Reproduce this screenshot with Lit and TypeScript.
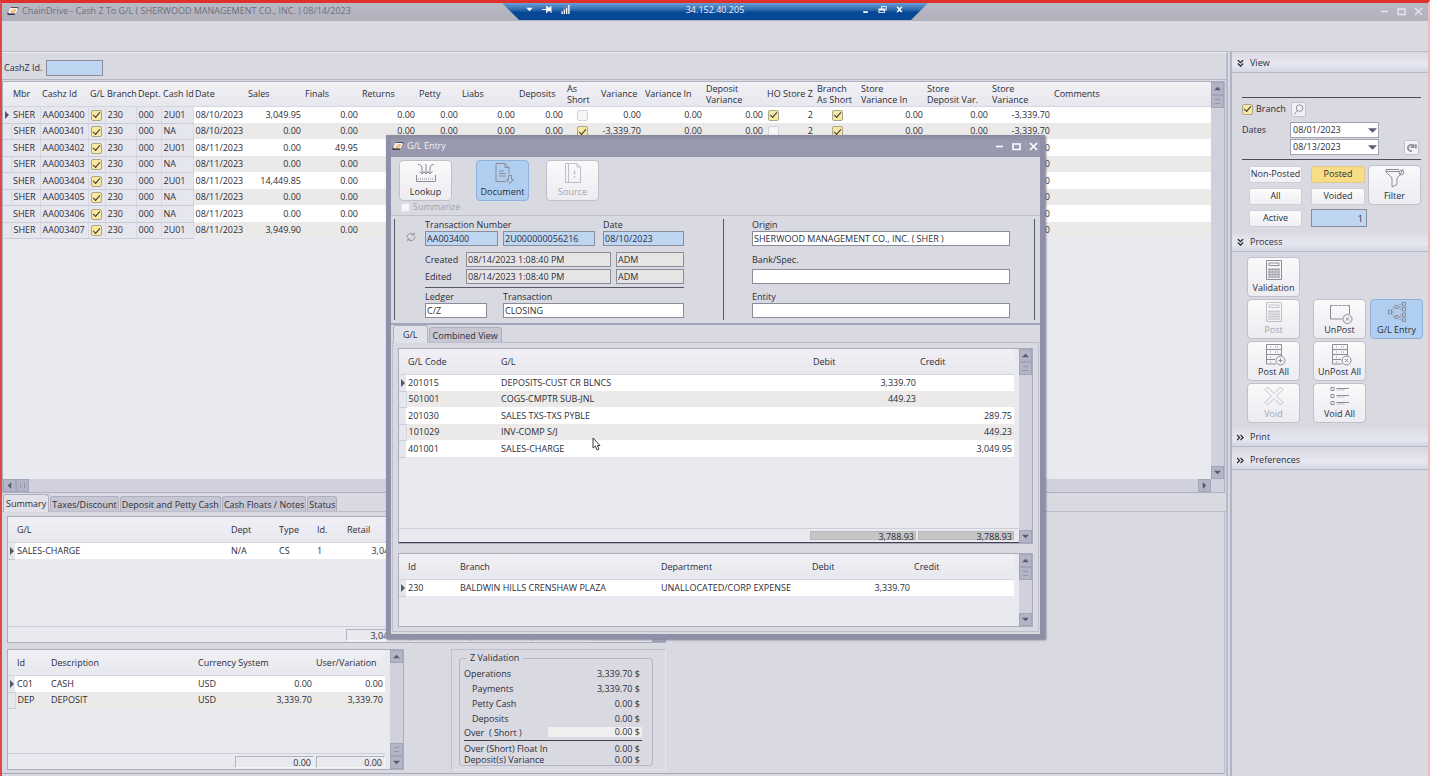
import { LitElement, html, svg, css, nothing } from "lit";
import { customElement } from "lit/decorators.js";
import { classMap } from "lit/directives/class-map.js";

type Col = { w?: number; head?: string; kind?: "num" | "check" | "arrow"; frozen?: boolean };
type Cell = string | boolean | null;

const GRID_COLS: Col[] = [
  { w: 8, kind: "arrow", frozen: true },
  { w: 29, head: "Mbr", frozen: true },
  { w: 48, head: "Cashz Id", frozen: true },
  { w: 17, head: "G/L", kind: "check", frozen: true },
  { w: 31, head: "Branch", frozen: true },
  { w: 25, head: "Dept.", frozen: true },
  { w: 32, head: "Cash Id", frozen: true },
  { w: 53, head: "Date" },
  { w: 57, head: "Sales", kind: "num" },
  { w: 57, head: "Finals", kind: "num" },
  { w: 57, head: "Returns", kind: "num" },
  { w: 43, head: "Petty", kind: "num" },
  { w: 57, head: "Liabs", kind: "num" },
  { w: 48, head: "Deposits", kind: "num" },
  { w: 34, head: "As\nShort", kind: "check" },
  { w: 44, head: "Variance", kind: "num" },
  { w: 61, head: "Variance In", kind: "num" },
  { w: 61, head: "Deposit\nVariance", kind: "num" },
  { w: 16, head: "HO", kind: "check" },
  { w: 34, head: "Store Z", kind: "num" },
  { w: 44, head: "Branch\nAs Short", kind: "check" },
  { w: 66, head: "Store\nVariance In", kind: "num" },
  { w: 65, head: "Store\nDeposit Var.", kind: "num" },
  { w: 62, head: "Store\nVariance", kind: "num" },
  { head: "Comments" },
];

const z = (id: string, cash: string, date: string, sales: string, finals: string, short: boolean, variance: string, ho: boolean, sv: string): Cell[] => [
  null, "SHER", id, true, "230", "000", cash, date, sales, finals, "0.00", "0.00", "0.00", "0.00",
  short, variance, "0.00", "0.00", ho, "2", true, "0.00", "0.00", sv, "",
];

const GRID_ROWS: Cell[][] = [
  z("AA003400", "2U01", "08/10/2023", "3,049.95", "0.00", false, "0.00", true, "-3,339.70"),
  z("AA003401", "NA", "08/10/2023", "0.00", "0.00", true, "-3,339.70", false, "-3,339.70"),
  z("AA003402", "2U01", "08/11/2023", "0.00", "49.95", false, "0.00", false, "0.00"),
  z("AA003403", "NA", "08/11/2023", "0.00", "0.00", false, "0.00", false, "0.00"),
  z("AA003404", "2U01", "08/11/2023", "14,449.85", "0.00", false, "0.00", false, "0.00"),
  z("AA003405", "NA", "08/11/2023", "0.00", "0.00", false, "0.00", false, "0.00"),
  z("AA003406", "NA", "08/11/2023", "0.00", "0.00", false, "0.00", false, "0.00"),
  z("AA003407", "2U01", "08/11/2023", "3,949.90", "0.00", false, "0.00", false, "0.00"),
];

const SUMMARY_COLS: Col[] = [
  { w: 7, kind: "arrow", frozen: true }, { w: 214, head: "G/L" }, { w: 48, head: "Dept" }, { w: 38, head: "Type" },
  { w: 30, head: "Id." }, { w: 64, head: "Retail", kind: "num" }, { w: 61 }, { w: 61 }, { w: 57 }, {},
];
const CURRENCY_COLS: Col[] = [
  { w: 7, kind: "arrow", frozen: true }, { w: 34, head: "Id" }, { w: 147, head: "Description" },
  { w: 36, head: "Currency System" }, { w: 82, kind: "num" }, { head: "User/Variation", kind: "num" },
];
const GL_COLS: Col[] = [
  { w: 7, kind: "arrow", frozen: true }, { w: 93, head: "G/L Code" }, { head: "G/L" },
  { w: 107, head: "Debit", kind: "num" }, { w: 96, head: "Credit", kind: "num" },
];
const BRANCH_COLS: Col[] = [
  { w: 7, kind: "arrow", frozen: true }, { w: 52, head: "Id" }, { head: "Branch" }, { w: 151, head: "Department" },
  { w: 102, head: "Debit", kind: "num" }, { w: 102, head: "Credit", kind: "num" },
];

const ledger = svg`<path d="M12 20H2.500V.5h15V12M2.500 5.500h15M2.500 10.500h15M2.500 15.500H11"/><path stroke-dasharray="1 1" d="M6 3h2M6 8h2M6 13h2M6 18h2M11 3h4M11 8h4"/><circle cx="16.500" cy="16.500" r="4.500"/>`;

const ICONS: Record<string, unknown> = {
  lookup: svg`<path d="M2 1.500c3 0 4 1.500 4 4.500v5M3.500 8.500L6 11l2.500-2.500M10 1v10M7.500 8.500L10 11l2.500-2.500M18 1.500c-3 0-4 1.500-4 4.500v5M11.500 8.500L14 11l2.500-2.500M.5 12v6.500h19V12"/><path stroke-dasharray="1 1" d="M2 16h16"/>`,
  document: svg`<path d="M13 18.500H3V.5h9l4 4V11M12 .5v4h4M6 8h5M6 10.500h7M6 13h7M15.500 12.500h3v4h2l-3.500 4-3.500-4h2z"/>`,
  source: svg`<path d="M2.500.5H14l3.500 3.500v15.500h-15zM5.500.5v19M14 .5V4h3.500"/><path stroke-width="1.500" d="M11.500 7.500v4M11.500 13v1.500"/>`,
  calc: svg`<path d="M2.500.5h15v19h-15zM5 3h10v2.500H5z"/><path class="fill" d="M4 8h12v10H4z" opacity=".35"/><path stroke-dasharray="2 1" d="M4.500 9.500h11M4.500 12h11M4.500 14.500h11M4.500 17h11"/>`,
  unpost: svg`<path d="M12 17H.5V3.500M19.500 3.500V12"/><path stroke-dasharray="3 1" d="M.5 3.500h19"/><circle cx="17.500" cy="17" r="4.500"/><path d="M16 15.500l3 3M19 15.500l-3 3"/>`,
  postall: svg`${ledger}<path d="M14.500 16.500h4M16.500 14.500v4"/>`,
  unpostall: svg`${ledger}<path d="M15 15l3 3M18 15l-3 3"/>`,
  cross: svg`<path d="M3.500 1L10 7.500 16.500 1 19 3.500 12.500 10l6.500 6.500-2.500 2.500L10 12.500 3.500 19 1 16.500 7.500 10 1 3.500z"/>`,
  list: svg`<path d="M1 1.500h3v3H1zM1 8.500h3v3H1zM1 15.500h3v3H1zM6.500 2.500h12.500M6.500 9.500h12.500M6.500 16.500h12.500"/><path opacity=".5" d="M6.500 4h8M6.500 11h8M6.500 18h8"/>`,
  tree: svg`<path d="M1.500 8h3v4h-3zM8 3.500h3v3H8zM8 13.500h3v3H8zM15.500.5h3v3.500h-3zM15.500 5.500h3V9h-3zM15.500 11h3v3.500h-3zM15.500 16h3v3.500h-3z"/><path stroke-dasharray="1 1" d="M6 10V5h2M6 10v5h2M11 5h2V2h2M13 5v2.500h2M11 15h2v-2h2M13 15v3h2"/>`,
  funnel: svg`<path d="M14 1.500H1V4l6 6v9l5-2.500V10l3-3"/><path d="M1 3.500h13"/><circle cx="16.500" cy="4.500" r="2.300"/><path d="M18 1l-3.500 7"/>`,
  magnifier: svg`<circle cx="12" cy="7.500" r="6" stroke-width="1.800"/><path stroke-width="1.800" d="M8 12l-6 7"/>`,
  redo: svg`<path stroke-width="3" d="M11 16a5.500 5.500 0 1 1 2-9M14 4v5.500H8.500M18 4v8"/>`,
  refresh: svg`<path stroke-width="1.800" d="M2 11V9.500a8 8 0 0 1 14-4M18 9v1.500a8 8 0 0 1-14 4M16.500 1v5H11M3.500 19v-5H9"/>`,
};

const icon = (name: string) => html`<svg class="ico" viewBox="0 0 20 20" aria-hidden="true">${ICONS[name]}</svg>`;

const logo = html`<svg class="logo" viewBox="0 0 24 20" aria-hidden="true">
  <path d="M2 15L7 3h16l-6 12z" fill="#f6f6f8"/><path d="M1 12v6h14l2-3H4z" fill="#3a3a44"/>
  <path d="M8 2h15v5l-3-3H7z" fill="#50505c"/><path d="M7 12l4-5 5-1 2 3-4 4-5 1z" fill="#f0a848"/><circle cx="12.500" cy="9.500" r="1.500" fill="#fff"/>
</svg>`;

const tri = (dir: string) => html`<svg class="tri" viewBox="0 0 8 8" aria-hidden="true"><path d=${
  { up: "M0 6l4-4 4 4z", down: "M0 2h8L4 6z", left: "M6 0v8L2 4z", right: "M2 0l4 4-4 4z" }[dir]!}/></svg>`;

const vscroll = (thumb: "top" | "bottom" | "none" = "top") => html`<div class="vscroll">
  <button class="sb" aria-label="Scroll up">${tri("up")}</button>
  ${thumb === "top" ? html`<span class="thumb"></span>` : nothing}
  <span class="track"></span>
  ${thumb === "bottom" ? html`<span class="thumb"></span>` : nothing}
  <button class="sb" aria-label="Scroll down">${tri("down")}</button>
</div>`;

const cellBody = (c: Col, v: Cell, first: boolean, label: string) => {
  if (c.kind === "arrow") return first ? html`<svg class="mark" viewBox="0 0 4 8" aria-hidden="true"><path d="M0 0l4 4-4 4z"/></svg>` : nothing;
  if (typeof v === "boolean") return html`<input type="checkbox" aria-label=${label} .checked=${v}>`;
  return v;
};

const dataTable = (cols: Col[], rows: Cell[][]) => html`<table>
  <colgroup>${cols.map((c) => html`<col style=${c.w ? `width:${c.w}px` : ""}>`)}</colgroup>
  <thead><tr>${cols.map((c) => html`<th scope="col">${c.head ?? ""}</th>`)}</tr></thead>
  <tbody>${rows.map((r, i) => html`<tr>${cols.map((c, j) => html`<td class=${classMap({
    num: c.kind === "num", check: c.kind === "check", frozen: !!c.frozen, mk: c.kind === "arrow",
  })}>${cellBody(c, r[j] ?? "", i === 0, (c.head ?? "").replace("\n", " "))}</td>`)}</tr>`)}</tbody>
</table>`;

const tool = (name: string, label: string, cls = "", disabled = false) =>
  html`<button class="tool ${cls}" ?disabled=${disabled}>${icon(name)}<span>${label}</span></button>`;

const chevrons = (down: boolean) => html`<svg class="chev" viewBox="0 0 8 8" aria-hidden="true"><path d=${
  down ? "M1 0l3 3 3-3M1 4l3 3 3-3" : "M0 1l3 3-3 3M4 1l3 3-3 3"}/></svg>`;

@customElement("app-root")
export class AppRoot extends LitElement {
  static styles = css`
    :host { display: block; font: 9px/12px "Open Sans", "Noto Sans", sans-serif; color: #2c2d38; }
    * { box-sizing: border-box; }
    button, input, select { font: inherit; color: inherit; margin: 0; padding: 0; border-radius: 0; }
    button { cursor: pointer; }
    .page { position: relative; display: flex; flex-direction: column; min-height: 100vh; overflow: hidden; background: #d9d9e2;
      border-top: 3px solid #e0302c; border-left: 2px solid #d94a48; border-right: 2px solid #f2b9bd; }

    .titlebar { display: flex; align-items: center; gap: 3px; height: 18px; padding: 0 5px 2px; background: linear-gradient(#b9b9c5, #b1b1be); color: #6d6e79; }
    .logo { width: 12px; height: 10px; flex: none; }
    .winbtns { display: flex; gap: 8px; margin-left: auto; }
    .winbtns button { width: 9px; height: 9px; border: 0; background: none; display: flex; }
    .winbtns svg { width: 9px; height: 9px; fill: none; stroke: #e6e6ee; stroke-width: 1.4; }
    .remote { position: absolute; top: 0; left: 50%; transform: translateX(-50%); width: 426px; height: 17px; color: #e9effa;
      clip-path: polygon(0 0, 100% 0, 409px 100%, 17px 100%); background: linear-gradient(#6aa0d6, #2c68ad 40%, #064796 55%, #064796);
      display: grid; grid-template-columns: 1fr auto 1fr; align-items: center; padding: 0 24px 4px 24px; }
    .remote svg { display: block; height: 9px; fill: #fff; stroke: none; }
    .remote .grp { display: flex; gap: 9px; align-items: center; }
    .remote .end { justify-content: flex-end; gap: 8px; }
    .ribbon { height: 31px; border-bottom: 1px solid #bcbcca; }
    .main { flex: 1; display: flex; min-height: 0; }
    .left { flex: 1; min-width: 0; display: flex; flex-direction: column; border-right: 2px solid #b9b9c8; border-top: 1px solid #ececf3; }
    .idrow { display: flex; align-items: center; gap: 4px; height: 27px; padding: 4px 2px 0; border-bottom: 1px solid #b4b4c4; }
    .field { height: 15px; border: 1px solid #8b8c9a; background: #fff; padding: 0 1px; min-width: 0; width: 100%; outline: 0; }
    .blue { background: #bfd6f2; }
    .grey { background: #e5e5e5; }
    .idrow .field { width: 57px; height: 16px; }

    .gridbox { flex: 1; display: flex; flex-direction: column; margin: 1px 1px 0 0; border: 1px solid #b0b0c0; background: #e9e9f0; }
    .gridrow { flex: 1; display: flex; }
    .gridcell { flex: 1; min-width: 0; }
    .gridcell th { height: 24px; }
    table { width: 100%; border-collapse: collapse; table-layout: fixed; }
    th { height: 25px; padding: 0 0 0 2px; text-align: left; font-weight: 400; white-space: pre; line-height: 11px;
      background: linear-gradient(#f0f0f5, #e7e7ee); border-bottom: 1px solid #d6d6e0; overflow: visible; }
    td { height: 16px; padding: 0 2px; white-space: nowrap; line-height: 12px; background: #fff; }
    tbody tr:nth-child(odd) td { height: 17px; }
    tbody tr:nth-child(even) td { background: #ebeae8; }
    tbody td.frozen, tbody tr:nth-child(even) td.frozen { background: #e6e6ee; border-bottom: 1px solid #ccccd8; border-right: 1px solid #d8d8e2; }
    tbody td.mk { border-right: 0; padding: 0 0 0 2px; }
    td.num { text-align: right; }
    td.check { text-align: center; padding: 0; }
    .mark { display: block; width: 4px; height: 8px; fill: #555668; }
    input[type="checkbox"] { appearance: none; display: inline-grid; place-items: center; width: 11px; height: 11px; border: 1px solid #d2d2d8;
      border-radius: 2px; background: #f6f6f8; vertical-align: middle; flex: none; }
    input[type="checkbox"]:checked { background: #fbe89f; border-color: #a9a58f; }
    input[type="checkbox"]:checked::after { content: ""; width: 6px; height: 3px; border-left: 1px solid #33343a; border-bottom: 1px solid #33343a;
      transform: translateY(-1px) rotate(-48deg); }
    .vscroll { width: 13px; flex: none; display: flex; flex-direction: column; background: #d1d1dd; }
    .hscroll { display: flex; height: 13px; padding-right: 13px; background: #d1d1dd; }
    .hscroll .track, .vscroll .track { flex: 1; }
    .sb, .thumb { width: 13px; height: 13px; flex: none; border: 1px solid #a4a4b8; background: #b4b4c7; display: grid; place-items: center; }
    .thumb::after { content: ""; width: 5px; height: 3px; border: solid #9495a8; border-width: 1px 0; }
    .hscroll .thumb::after { width: 3px; height: 5px; border-width: 0 1px; }
    .tri { width: 7px; height: 7px; fill: #5a5b70; }

    .tabs { display: flex; align-items: flex-end; gap: 1px; height: 19px; padding: 0 1px; border-bottom: 1px solid #bdbdcb; }
    .tab { height: 15px; border: 1px solid #aeaebf; border-bottom: 0; border-radius: 3px 3px 0 0; background: #c7c7d4; padding: 0 1px; line-height: 13px; }
    .tab.on { height: 18px; background: #e1e1ea; margin-bottom: -1px; line-height: 15px; padding: 0 2px; }
    .below { display: flex; flex-direction: column; gap: 6px; padding: 4px 4px 3px 5px; margin-right: 1px; border-right: 1px solid #bdbdcb; border-bottom: 1px solid #a9a9bb; margin-bottom: 2px; }
    .panel { display: flex; border: 1px solid #acacbd; background: #e9e9f0; }
    .panel .inner { flex: 1; min-width: 0; display: flex; flex-direction: column; }
    .foot { margin-top: auto; display: flex; gap: 2px; height: 16px; padding: 2px 0 1px; border-top: 1px solid #cfcfda; }
    .sum { border: 1px solid #b4b4bf; border-right-color: #f6f6fa; border-bottom-color: #f6f6fa; text-align: right; line-height: 11px; }
    .summary { width: 659px; height: 127px; }
    .s1 { width: 62px; margin-left: 338px; padding-right: 1px; }
    .sx { width: 59px; }
    .lower { display: flex; gap: 47px; }
    .currency { width: 397px; height: 121px; }
    .currency .inner { padding-right: 5px; }
    .c1 { width: 79px; margin-left: 227px; padding-right: 2px; }
    .c2 { flex: 1; padding-right: 2px; }
    .zbox { width: 215px; height: 121px; padding: 2px 12px 4px 7px; border: 1px solid #bfbfcc; border-right-color: #e6e6ee; border-bottom-color: #e6e6ee; }
    fieldset { margin: 0; height: 114px; min-width: 0; border: 1px solid #b4b4c3; border-radius: 3px; padding: 3px 10px 0 4px; }
    legend { margin-left: 2px; padding: 0 4px; }
    dl { margin: 0; display: flex; flex-direction: column; }
    .zr { display: flex; justify-content: space-between; height: 15px; line-height: 14px; padding-right: 2px; white-space: pre; }
    .zr dd { margin: 0; text-align: right; }
    .zr.in dt { padding-left: 8px; }
    .zr.over { height: 13px; line-height: 12px; }
    .zr.over dd { background: #efefef; width: 94px; height: 10px; line-height: 10px; margin-right: -2px; padding-right: 2px; }
    .zr.cut { border-top: 1px solid #3f404c; height: 14px; padding-top: 1px; line-height: 14px; }
    .zr.last { height: 12px; line-height: 12px; }

    .side { width: 198px; flex: none; margin-left: 2px; border-left: 2px solid #b3b3c6; padding-top: 2px; }
    .sec { display: flex; align-items: center; gap: 6px; width: 100%; height: 19px; border: 0; border-bottom: 1px solid #b9b9cb; padding: 0 5px;
      background: linear-gradient(#dcdce6, #e6e7f0 60%, #d4d7e3); text-align: left; }
    .chev { width: 7px; height: 7px; fill: none; stroke: #22232c; stroke-width: 1.4; }
    .view { padding: 24px 7px 6px 10px; }
    .rule { border-top: 1px solid #4c4d58; }
    .dates { display: grid; grid-template-columns: 48px 88px 1fr; row-gap: 1px; align-items: center; padding: 2px 0 4px; }
    .dates .br { grid-column: 1 / -1; display: flex; align-items: center; gap: 3px; height: 18px; margin-bottom: 3px; }
    .dates .br label { margin-right: 2px; }
    .mini { width: 15px; height: 15px; border: 1px solid #c3c3cd; border-radius: 2px; background: #f2f2f6; display: grid; place-items: center; }
    .mini .ico { width: 11px; height: 11px; }
    .mini.end { justify-self: end; margin-right: 2px; }
    .combo { display: grid; grid-column: 2; }
    .combo > * { grid-area: 1 / 1; }
    .combo select { appearance: none; width: 89px; height: 16px; border: 1px solid #a3a4b2; background: #fff; padding: 0 2px; }
    .combo .tri { justify-self: end; align-self: center; margin-right: 2px; width: 9px; height: 9px; pointer-events: none; }
    .filters { display: grid; grid-template-columns: 53px 54px 52px; column-gap: 9px; row-gap: 4px; padding: 5px 0 0 7px; align-items: center; }
    .filters button.f { height: 17px; border: 1px solid #cfcfd8; border-radius: 2px; background: linear-gradient(#fcfcfd, #f0f0f4); }
    .filters button.yl { background: #f9dd86; border-color: #dcc98c; }
    .filters .tool { grid-row: 1 / 3; grid-column: 3; margin-left: -6px; }
    .filters .field { text-align: right; width: 56px; height: 18px; padding-right: 3px; }
    .tool { width: 53px; height: 40px; display: flex; flex-direction: column; align-items: center; justify-content: space-between; padding: 2px 0;
      border: 1px solid #c0c0cb; border-radius: 4px; background: linear-gradient(#fafafb, #ececf1); line-height: 12px; white-space: nowrap; }
    .ico { width: 20px; height: 20px; fill: none; stroke: #8b8c98; stroke-width: 1; overflow: visible; }
    .ico circle { fill: #f2f2f5; }
    .ico .fill { fill: #7e7f8b; stroke: none; }
    .tool.sel { background: #b0ceef; border-color: #8db0dc; }
    .tool:disabled { color: #a4a5ae; }
    .tool:disabled .ico { opacity: .5; }
    .process { display: grid; grid-template-columns: 66px 57px 53px; row-gap: 2px; padding: 5px 0 5px 15px; }
    .shut { margin-bottom: 4px; }

    .modal { position: absolute; left: 384px; top: 132px; width: 659px; border: 5px solid #8f8fa8; border-top: 0; background: #d9d9e2;
      box-shadow: 1px 1px 2px #77778c; }
    .mtitle { display: flex; align-items: center; gap: 3px; height: 22px; padding: 0 2px 0 1px; background: linear-gradient(#8989a0, #9a9ab0 30%, #9696ad); color: #f1f1f6; }
    .mtitle .winbtns svg { stroke: #fff; stroke-width: 1.6; }
    .mtools { height: 59px; padding: 3px 8px 0; border-bottom: 1px solid #c0c0cd; }
    .mrow { display: flex; }
    .mrow .tool { height: 41px; }
    .mrow .d { margin-left: 24px; }
    .mrow .s { margin-left: 17px; }
    .chk { display: flex; align-items: center; gap: 3px; }
    .mtools .chk { color: #a2a3ad; padding-left: 2px; }
    .mtools .chk input { width: 9px; height: 9px; border-color: #e1e1e8; }
    .form { display: flex; margin: 3px 5px 3px 3px; border: solid #555663; border-width: 0 1px; height: 101px; }
    .fa { width: 329px; padding: 0 39px 0 30px; border-right: 1px solid #555663; position: relative; }
    .fb { flex: 1; padding: 0 24px 0 28px; }
    .fa .ico { position: absolute; left: 11px; top: 13px; width: 10px; height: 10px; }
    .g1 { display: grid; grid-template-columns: 78px 100px 81px; }
    .g1 .w1 { width: 73px; } .g1 .w2 { width: 92px; } .g1 .lab2 { grid-column: 1 / 3; }
    .form label { display: block; height: 12px; line-height: 11px; }
    .form .field { display: block; }
    .g2 { display: grid; grid-template-columns: 41px 145px 73px; row-gap: 2px; margin-top: 6px; align-items: center; padding-bottom: 3px; border-bottom: 1px solid #555663; }
    .g2 .w3 { width: 68px; margin-left: 5px; }
    .g3 { display: grid; grid-template-columns: 62px 181px; column-gap: 16px; margin-top: 3px; }
    .form .gap1 { margin-top: 8px; height: 15px; }
    .form .gap2 { margin-top: 7px; }
    .mtabs { border-top: 2px solid #a5a5b9; height: 20px; padding: 0 2px; }
    .mtabs .tab { padding: 0 3px; }
    .mtabs .tab.on { padding: 0 9px; }
    .mbody { margin: 0 1px 2px; border: solid #bdbdcb; border-width: 0 1px 1px; padding: 5px 5px 4px; display: flex; flex-direction: column; gap: 9px; }
    .mbody .inner { padding-right: 5px; }
    .gl { height: 196px; }
    .gl .foot { height: 15px; padding: 2px 5px 2px 0; margin-right: -5px; border-bottom: 1px solid #41424e; }
    .gl .sum { background: #c6c6c6; border-color: #b8b8b8; line-height: 10px; padding-right: 1px; }
    .g-a { width: 106px; margin-left: auto; } .g-b { width: 96px; }
    .bl { height: 74px; }
    .cursor { position: absolute; left: 200px; top: 302px; width: 11px; height: 15px; }
  `;

  private winButtons() {
    return html`<div class="winbtns">
      <button aria-label="Minimize"><svg viewBox="0 0 9 9"><path d="M1 4.500h7"/></svg></button>
      <button aria-label="Maximize"><svg viewBox="0 0 9 9"><path d="M1 2h7v5.500h-7z"/></svg></button>
      <button aria-label="Close"><svg viewBox="0 0 9 9"><path d="M1 1l7 7M8 1l-7 7"/></svg></button>
    </div>`;
  }

  private remoteBar() {
    return html`<div class="remote">
      <div class="grp">
        <svg width="7" viewBox="0 0 7 10"><path d="M0 3h7L3.500 7z"/></svg>
        <svg width="10" viewBox="0 0 10 10"><path d="M0 4.500h4V1h1.500v1.500H9V1h1v8H9V7H5.500v2H4V5.500H0z"/></svg>
        <svg width="9" viewBox="0 0 9 10"><path d="M0 7h1.500v3H0zM2.500 5H4v5H2.500zM5 3h1.500v7H5zM7.500 0H9v10H7.500z"/></svg>
      </div>
      <span>34.152.40.205</span>
      <div class="grp end">
        <svg width="9" viewBox="0 0 9 10"><path d="M2 7h5v2H2z"/></svg>
        <svg width="9" viewBox="0 0 9 10"><path fill-rule="evenodd" d="M3 1h6v5H7v3H0V4h3zM4 2v2h3v1h1V2zM1 6v2h5V6z"/></svg>
        <svg width="9" viewBox="0 0 9 10"><path d="M1 2h2l1.500 1.500L6 2h2L5.700 5 8 8H6L4.500 6.500 3 8H1l2.300-3z"/></svg>
      </div>
    </div>`;
  }

  private zValidation() {
    const r = (k: string, v: string, c = "") => html`<div class="zr ${c}"><dt>${k}</dt><dd>${v}</dd></div>`;
    return html`<div class="zbox"><fieldset><legend>Z Validation</legend><dl>
      ${r("Operations", "3,339.70 $")}${r("Payments", "3,339.70 $", "in")}${r("Petty Cash", "0.00 $", "in")}${r("Deposits", "0.00 $", "in")}
      ${r("Over  ( Short )", "0.00 $", "over")}${r("Over (Short) Float In", "0.00 $", "cut")}${r("Deposit(s) Variance", "0.00 $", "last")}
    </dl></fieldset></div>`;
  }

  private sidePanel() {
    return html`<aside class="side">
      <button class="sec">${chevrons(true)}View</button>
      <div class="view">
        <div class="rule"></div>
        <div class="dates">
          <div class="br"><input type="checkbox" id="branch" checked><label for="branch">Branch</label><button class="mini" aria-label="Find branch">${icon("magnifier")}</button></div>
          <label for="from">Dates</label>
          <span class="combo"><select id="from"><option>08/01/2023</option></select>${tri("down")}</span><span></span>
          <span class="combo"><select aria-label="To date"><option>08/13/2023</option></select>${tri("down")}</span>
          <button class="mini end" aria-label="Reload">${icon("redo")}</button>
        </div>
        <div class="rule"></div>
        <div class="filters">
          <button class="f">Non-Posted</button><button class="f yl">Posted</button>
          <button class="f">All</button><button class="f">Voided</button>
          ${tool("funnel", "Filter")}
          <button class="f">Active</button><input class="field blue" aria-label="Active count" value="1">
        </div>
      </div>
      <button class="sec">${chevrons(true)}Process</button>
      <div class="process">
        ${tool("calc", "Validation")}<span></span><span></span>
        ${tool("calc", "Post", "", true)}${tool("unpost", "UnPost")}${tool("tree", "G/L Entry", "sel")}
        ${tool("postall", "Post All")}${tool("unpostall", "UnPost All")}<span></span>
        ${tool("cross", "Void", "", true)}${tool("list", "Void All")}
      </div>
      <button class="sec shut">${chevrons(false)}Print</button>
      <button class="sec shut">${chevrons(false)}Preferences</button>
    </aside>`;
  }

  private entryWindow() {
    return html`<section class="modal" role="dialog" aria-label="G/L Entry">
      <div class="mtitle">${logo}<span>G/L Entry</span>${this.winButtons()}</div>
      <div class="mtools">
        <div class="mrow">${tool("lookup", "Lookup")}${tool("document", "Document", "sel d")}${tool("source", "Source", "s", true)}</div>
        <label class="chk"><input type="checkbox" disabled>Summarize</label>
      </div>
      <div class="form">
        <div class="fa">
          ${icon("refresh")}
          <div class="g1">
            <label class="lab2" for="tn">Transaction Number</label><label for="dt">Date</label>
            <input class="field blue w1" id="tn" value="AA003400"><input class="field blue w2" aria-label="Transaction reference" value="2U000000056216"><input class="field blue" id="dt" value="08/10/2023">
          </div>
          <div class="g2">
            <label for="cr">Created</label><input class="field grey" id="cr" readonly value="08/14/2023 1:08:40 PM"><input class="field grey w3" aria-label="Created by" readonly value="ADM">
            <label for="ed">Edited</label><input class="field grey" id="ed" readonly value="08/14/2023 1:08:40 PM"><input class="field grey w3" aria-label="Edited by" readonly value="ADM">
          </div>
          <div class="g3">
            <label for="lg">Ledger</label><label for="tr">Transaction</label>
            <input class="field" id="lg" value="C/Z"><input class="field" id="tr" value="CLOSING">
          </div>
        </div>
        <div class="fb">
          <label for="or">Origin</label><input class="field" id="or" value="SHERWOOD MANAGEMENT CO., INC. ( SHER )">
          <label class="gap1" for="bk">Bank/Spec.</label><input class="field" id="bk">
          <label class="gap2" for="en">Entity</label><input class="field" id="en">
        </div>
      </div>
      <div class="tabs mtabs"><button class="tab on">G/L</button><button class="tab">Combined View</button></div>
      <div class="mbody">
        <div class="panel gl">
          <div class="inner">
            ${dataTable(GL_COLS, [
              [null, "201015", "DEPOSITS-CUST CR BLNCS", "3,339.70", ""],
              [null, "501001", "COGS-CMPTR SUB-JNL", "449.23", ""],
              [null, "201030", "SALES TXS-TXS PYBLE", "", "289.75"],
              [null, "101029", "INV-COMP S/J", "", "449.23"],
              [null, "401001", "SALES-CHARGE", "", "3,049.95"],
            ])}
            <div class="foot"><div class="sum g-a">3,788.93</div><div class="sum g-b">3,788.93</div></div>
          </div>
          ${vscroll()}
        </div>
        <div class="panel bl">
          <div class="inner">${dataTable(BRANCH_COLS, [[null, "230", "BALDWIN HILLS CRENSHAW PLAZA", "UNALLOCATED/CORP EXPENSE", "3,339.70", ""]])}</div>
          ${vscroll()}
        </div>
      </div>
      <svg class="cursor" viewBox="0 0 11 15" aria-hidden="true"><path d="M2 1v10l2.300-2 1.700 4 2-1-1.700-3.500H9z" fill="#fff" stroke="#3c3d48"/></svg>
    </section>`;
  }

  render() {
    return html`<div class="page">
      <header class="titlebar">${logo}<span>ChainDrive - Cash Z To G/L ( SHERWOOD MANAGEMENT CO., INC. ) 08/14/2023</span>${this.winButtons()}</header>
      ${this.remoteBar()}
      <div class="ribbon"></div>
      <div class="main">
        <div class="left">
          <div class="idrow"><label for="cz">CashZ Id.</label><input class="field blue" id="cz"></div>
          <div class="gridbox">
            <div class="gridrow"><div class="gridcell">${dataTable(GRID_COLS, GRID_ROWS)}</div>${vscroll()}</div>
            <div class="hscroll"><button class="sb" aria-label="Scroll left">${tri("left")}</button><span class="thumb"></span><span class="track"></span><button class="sb" aria-label="Scroll right">${tri("right")}</button></div>
          </div>
          <div class="tabs">
            <button class="tab on">Summary</button><button class="tab">Taxes/Discount</button><button class="tab">Deposit and Petty Cash</button><button class="tab">Cash Floats / Notes</button><button class="tab">Status</button>
          </div>
          <div class="below">
            <div class="panel summary">
              <div class="inner">
                ${dataTable(SUMMARY_COLS, [[null, "SALES-CHARGE", "N/A", "CS", "1", "3,049.95"]])}
                <div class="foot"><div class="sum s1">3,049.95</div><div class="sum sx"></div><div class="sum sx"></div><div class="sum sx"></div></div>
              </div>
              ${vscroll()}
            </div>
            <div class="lower">
              <div class="panel currency">
                <div class="inner">
                  ${dataTable(CURRENCY_COLS, [[null, "C01", "CASH", "USD", "0.00", "0.00"], [null, "DEP", "DEPOSIT", "USD", "3,339.70", "3,339.70"]])}
                  <div class="foot"><div class="sum c1">0.00</div><div class="sum c2">0.00</div></div>
                </div>
                ${vscroll("bottom")}
              </div>
              ${this.zValidation()}
            </div>
          </div>
        </div>
        ${this.sidePanel()}
      </div>
      ${this.entryWindow()}
    </div>`;
  }
}
